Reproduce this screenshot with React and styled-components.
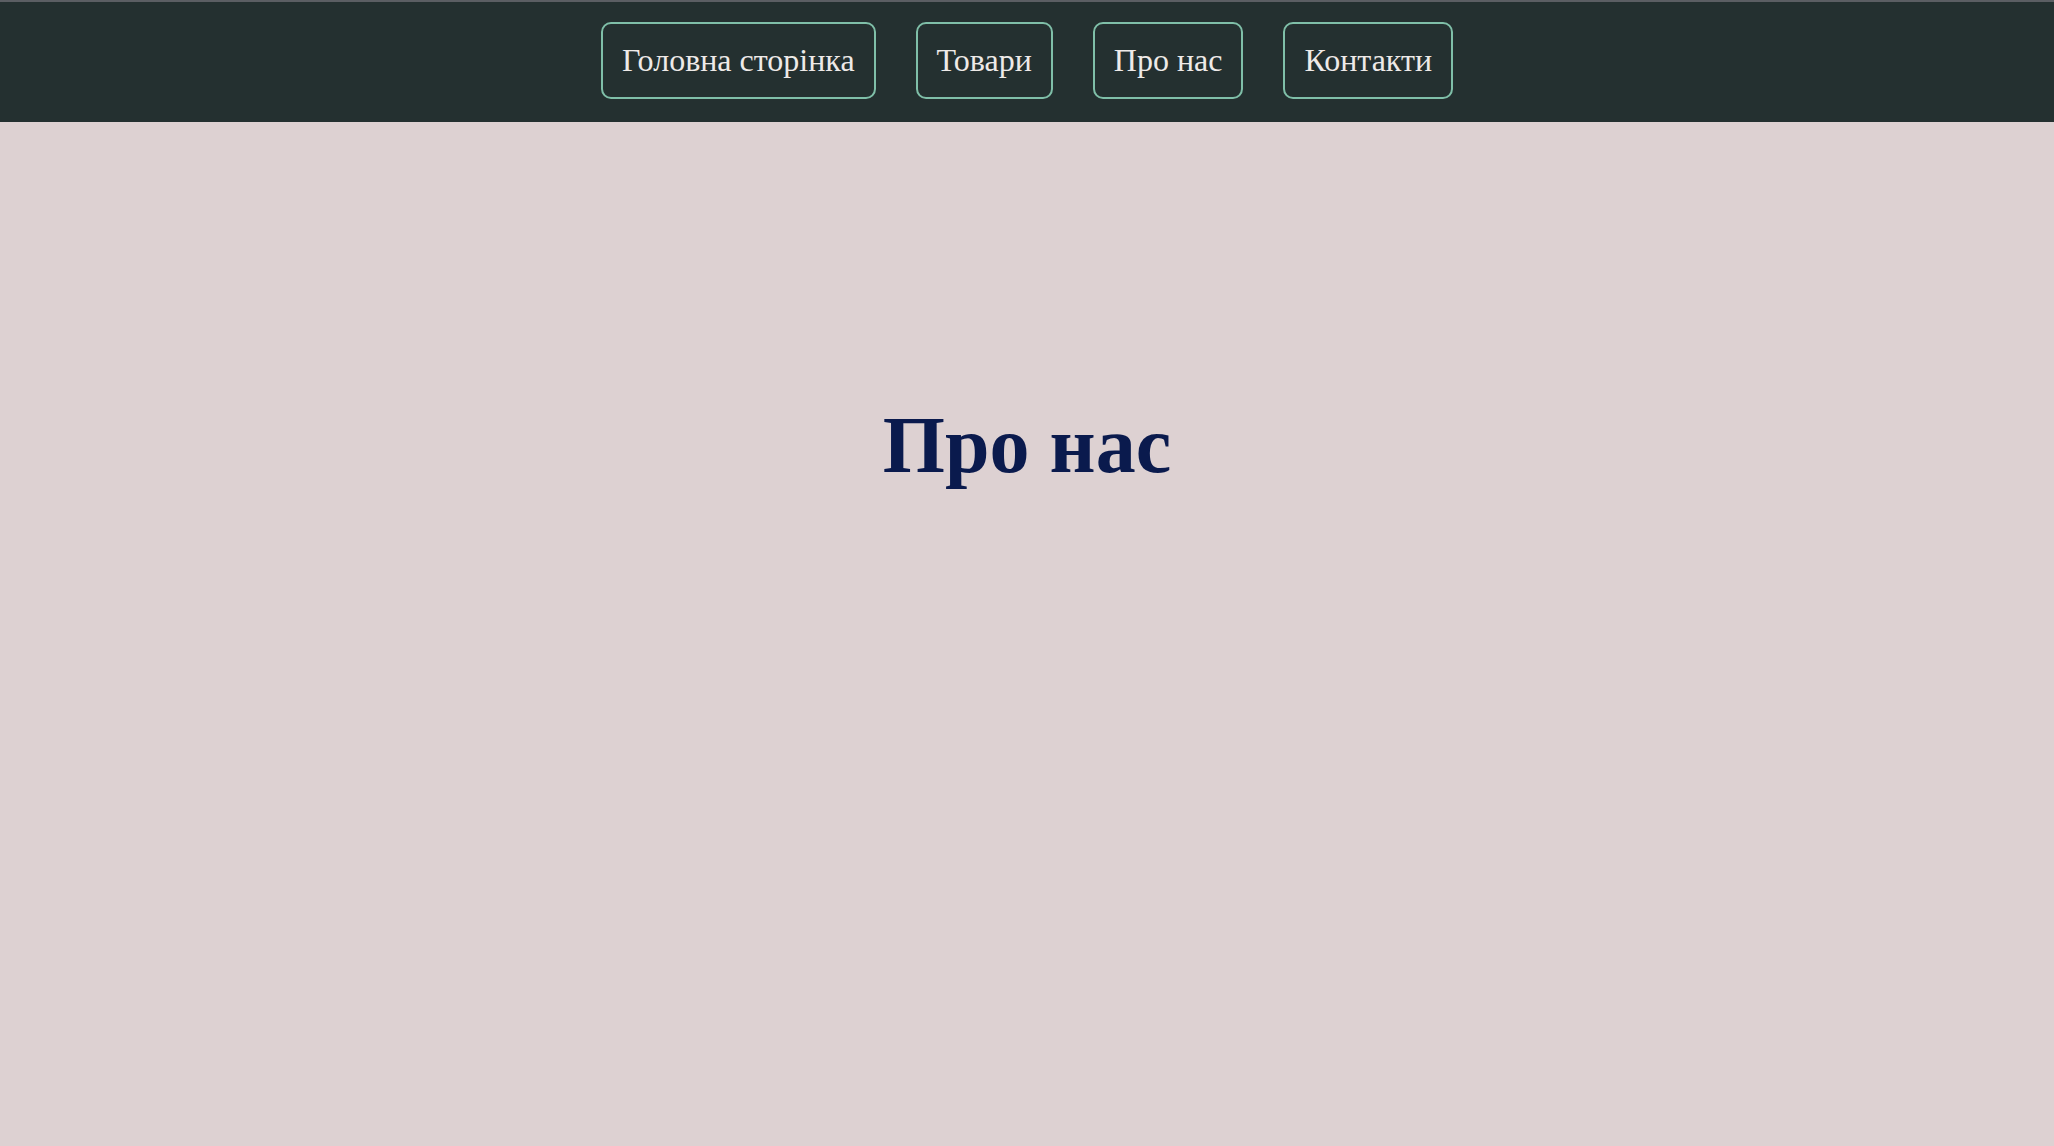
import styled, { createGlobalStyle } from 'styled-components';

const GlobalStyle = createGlobalStyle`
  html, body {
    margin: 0;
    padding: 0;
    background: #ddd1d2;
    font-family: "Liberation Serif", "Times New Roman", serif;
  }
`;

const Page = styled.div`
  min-height: 100vh;
  background: #ddd1d2;
`;

const Nav = styled.nav`
  height: 122px;
  border-top: 2px solid #5b5e63;
  background: #243030;
  display: flex;
  justify-content: center;
  align-items: center;
  gap: 40px;
  padding-bottom: 4px;
  box-sizing: border-box;
`;

const NavButton = styled.a`
  display: flex;
  align-items: center;
  height: 77px;
  box-sizing: border-box;
  padding: 0 19px;
  border: 2px solid #7fbfa8;
  border-radius: 10px;
  color: #eeeae8;
  font-size: 32px;
  text-decoration: none;
  cursor: pointer;
`;

const Main = styled.main`
  display: flex;
  justify-content: center;
  padding-top: 283px;
`;

const Title = styled.h1`
  margin: 0;
  font-size: 80px;
  font-weight: bold;
  color: #0a1a4d;
  line-height: 1;
`;

const links = ['Головна сторінка', 'Товари', 'Про нас', 'Контакти'];

export default function App() {
  return (
    <Page>
      <GlobalStyle />
      <Nav>
        {links.map(label => (
          <NavButton key={label}>{label}</NavButton>
        ))}
      </Nav>
      <Main>
        <Title>Про нас</Title>
      </Main>
    </Page>
  );
}
